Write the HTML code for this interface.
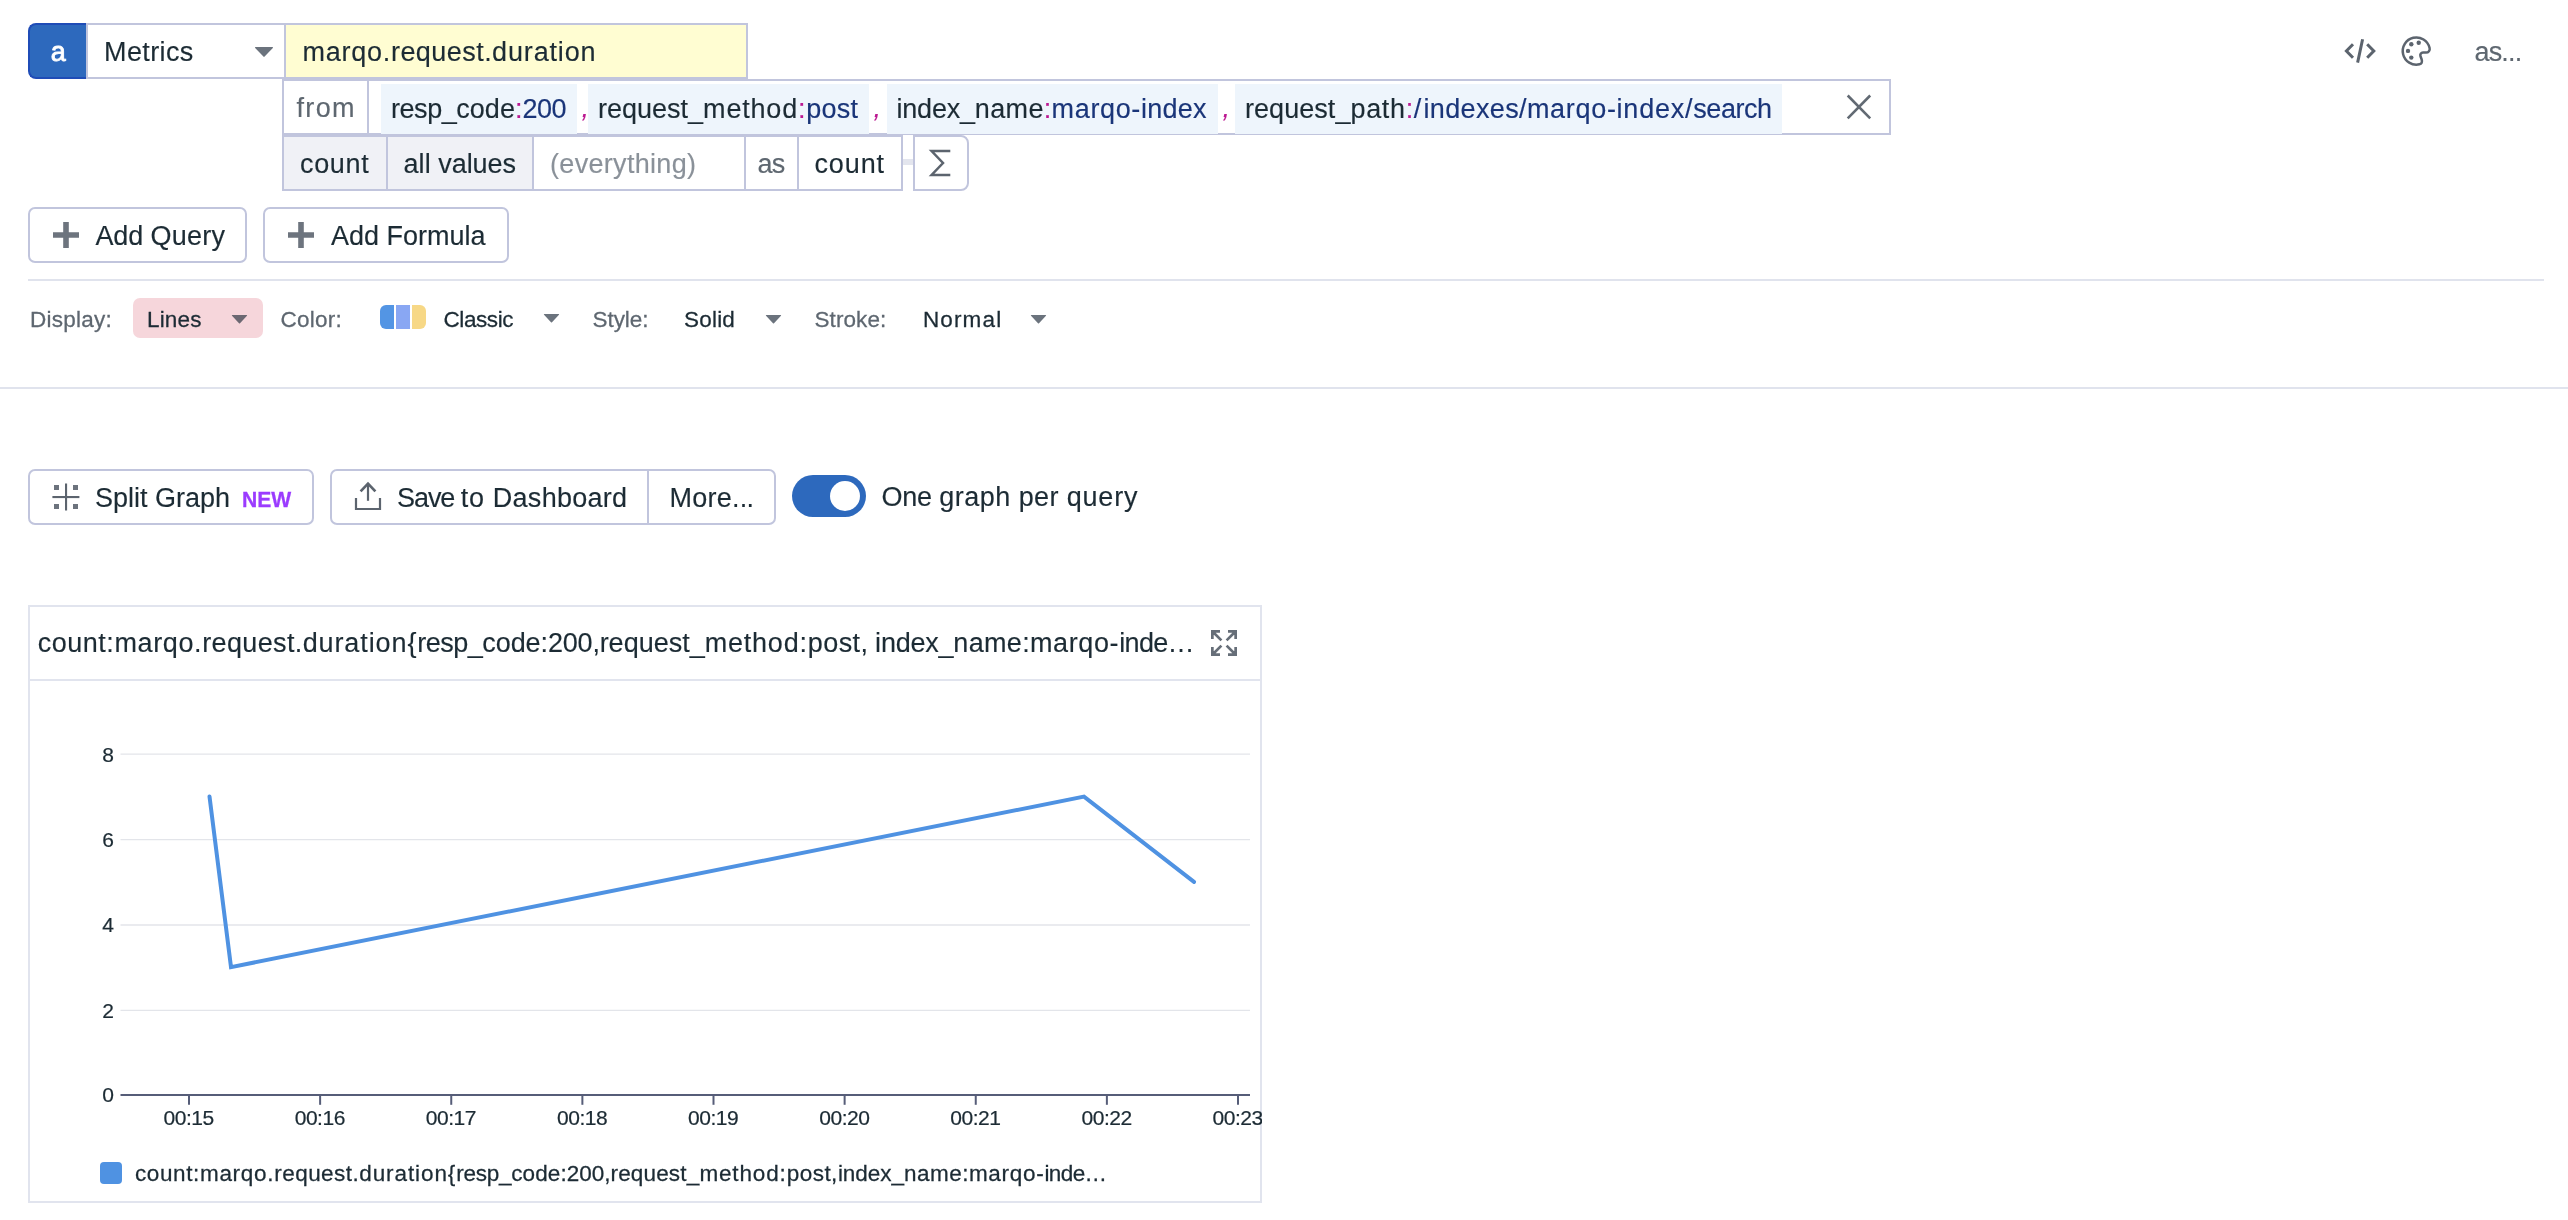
<!DOCTYPE html>
<html lang="en">
<head>
<meta charset="utf-8">
<title>Metrics Explorer</title>
<style>
html,body{margin:0;padding:0;background:#fff;}
body{width:2568px;height:1220px;position:relative;overflow:hidden;font-family:"Liberation Sans",Arial,sans-serif;color:#1c2b34;}
.t{position:absolute;white-space:pre;line-height:1;z-index:5;-webkit-text-stroke:0.15px;}
.b{position:absolute;box-sizing:border-box;}
.bd{border:2px solid #c1c5dd;background:#fff;}
.v{position:absolute;width:2px;background:#c1c5dd;}
.tag{position:absolute;top:84px;height:50px;background:#eef5fc;z-index:2;}
.cell{position:absolute;top:137px;height:52px;background:#f0f1f6;}
.btn{border:2px solid #c1c5dd;border-radius:7px;background:#fff;height:56px;}
.hr{position:absolute;height:2px;background:#e0e3ed;}
svg{position:absolute;overflow:visible;}
.ax{font-family:"Liberation Sans",Arial,sans-serif;font-size:21px;fill:#1c2b34;stroke:#1c2b34;stroke-width:0.22px;}
</style>
</head>
<body>

<!-- ===== query row 1 ===== -->
<div class="b" style="left:28px;top:23px;width:58px;height:56px;background:#2d69bd;border:2px solid #1f4cb7;border-right:none;border-radius:8px 0 0 8px;"></div>
<div class="b bd" style="left:86px;top:23px;width:200px;height:56px;"></div>
<div class="b bd" style="left:284px;top:23px;width:464px;height:56px;background:#fffdd2;"></div>
<svg style="left:254px;top:46px" width="20" height="12" viewBox="0 0 20 12"><path d="M1.6 1h16.8a.6.6 0 0 1 .45 1L10.6 10.6a.85.85 0 0 1-1.2 0L1.15 2A.6.6 0 0 1 1.6 1z" fill="#6b737d"/></svg>

<!-- top-right icons -->
<svg style="left:2340px;top:35px" width="40" height="32" viewBox="0 0 40 32" fill="none" stroke="#5c646e" stroke-width="3"><path d="M13 9.3L6.4 16l6.6 6.8M22.6 4.2l-5 23.4M27.2 9.3l6.6 6.7-6.6 6.8"/></svg>
<svg style="left:2400px;top:35px" width="32" height="32" viewBox="0 0 32 32"><path d="M19.5 29.3A13.6 13.6 0 1 1 29.6 13C30.2 15.5 28.5 17.6 26 17.6L23 17.6C21 17.6 19.8 19.3 20.5 21.2L21.6 24.2C22.6 27 21.5 29 19.5 29.3Z" fill="none" stroke="#5c646e" stroke-width="2.5" stroke-linejoin="round"/><g fill="#5c646e"><circle cx="11.3" cy="9.2" r="2.2"/><circle cx="18.7" cy="7.8" r="2.2"/><circle cx="8" cy="15.9" r="2.2"/><circle cx="11.3" cy="22.6" r="2.2"/></g></svg>

<!-- ===== query row 2 (from) ===== -->
<div class="b bd" style="left:282px;top:79px;width:1609px;height:56px;"></div>
<div class="v" style="left:367px;top:81px;height:52px;"></div>
<div class="tag" style="left:381px;width:196px;"></div>
<div class="tag" style="left:588px;width:281px;"></div>
<div class="tag" style="left:887px;width:331px;"></div>
<div class="tag" style="left:1235px;width:547px;"></div>
<svg style="left:1844px;top:92px" width="30" height="30" viewBox="0 0 30 30" stroke="#626a73" stroke-width="2.6" fill="none"><path d="M3.7 3.5l22.5 22.8M26.2 3.5L3.7 26.3"/></svg>

<!-- ===== query row 3 (aggregation) ===== -->
<div class="b bd" style="left:282px;top:135px;width:621px;height:56px;"></div>
<div class="cell" style="left:284px;width:102px;"></div>
<div class="v" style="left:386px;top:137px;height:52px;"></div>
<div class="cell" style="left:388px;width:144px;"></div>
<div class="v" style="left:532px;top:137px;height:52px;"></div>
<div class="v" style="left:744px;top:137px;height:52px;"></div>
<div class="v" style="left:797px;top:137px;height:52px;"></div>
<div class="b" style="left:903px;top:159px;width:10px;height:6px;background:#e3e5ee;"></div>
<div class="b bd" style="left:913px;top:135px;width:56px;height:56px;border-radius:0 8px 8px 0;"></div>
<svg style="left:925px;top:145px" width="32" height="36" viewBox="0 0 32 36" fill="none" stroke="#5c646e" stroke-width="2.5" stroke-linejoin="miter"><path d="M25.3 6.1H6.6L18 18 6.6 29.9h18.7"/></svg>

<!-- ===== add buttons ===== -->
<div class="b btn" style="left:28px;top:207px;width:219px;"></div>
<div class="b btn" style="left:263px;top:207px;width:246px;"></div>
<svg style="left:53px;top:222px" width="26" height="26" viewBox="0 0 26 26"><path d="M10.2 0h5.6v10.2H26v5.6H15.8V26h-5.6V15.8H0v-5.6h10.2z" fill="#6d747e"/></svg>
<svg style="left:288px;top:222px" width="26" height="26" viewBox="0 0 26 26"><path d="M10.2 0h5.6v10.2H26v5.6H15.8V26h-5.6V15.8H0v-5.6h10.2z" fill="#6d747e"/></svg>

<div class="hr" style="left:28px;top:279px;width:2516px;"></div>

<!-- ===== display options ===== -->
<div class="b" style="left:133px;top:298px;width:130px;height:40px;border-radius:7px;background:#f6d6db;"></div>
<svg style="left:230.5px;top:313.8px" width="17" height="11" viewBox="0 0 17 11"><path d="M1.4 1h14.2a.5.5 0 0 1 .38.85L9 9.2a.75.75 0 0 1-1 0L1 1.85A.5.5 0 0 1 1.4 1z" fill="#6c6872"/></svg>
<svg style="left:542.5px;top:312.8px" width="17" height="11" viewBox="0 0 17 11"><path d="M1.4 1h14.2a.5.5 0 0 1 .38.85L9 9.2a.75.75 0 0 1-1 0L1 1.85A.5.5 0 0 1 1.4 1z" fill="#6b737d"/></svg>
<svg style="left:764.5px;top:313.8px" width="17" height="11" viewBox="0 0 17 11"><path d="M1.4 1h14.2a.5.5 0 0 1 .38.85L9 9.2a.75.75 0 0 1-1 0L1 1.85A.5.5 0 0 1 1.4 1z" fill="#6b737d"/></svg>
<svg style="left:1029.5px;top:313.8px" width="17" height="11" viewBox="0 0 17 11"><path d="M1.4 1h14.2a.5.5 0 0 1 .38.85L9 9.2a.75.75 0 0 1-1 0L1 1.85A.5.5 0 0 1 1.4 1z" fill="#6b737d"/></svg>
<div class="b" style="left:380px;top:305px;width:14px;height:24px;background:#5395e4;border-radius:6px 0 0 6px;"></div>
<div class="b" style="left:396px;top:305px;width:14px;height:24px;background:#89a7f3;"></div>
<div class="b" style="left:412px;top:305px;width:14px;height:24px;background:#f7d886;border-radius:0 6px 6px 0;"></div>

<div class="hr" style="left:0;top:387px;width:2568px;"></div>

<!-- ===== graph toolbar ===== -->
<div class="b btn" style="left:28px;top:469px;width:286px;"></div>
<svg style="left:52px;top:483px" width="28" height="28" viewBox="0 0 28 28"><g fill="#5c646e"><rect x="13" y="0.5" width="2.1" height="27"/><rect x="0.4" y="13" width="27" height="2.1"/></g><g fill="#6c737d"><rect x="2" y="2" width="5" height="5"/><rect x="21" y="2" width="5" height="5"/><rect x="2" y="21" width="5" height="5"/><rect x="21" y="21" width="5" height="5"/></g></svg>
<div class="b btn" style="left:330px;top:469px;width:446px;"></div>
<div class="v" style="left:647px;top:471px;height:52px;"></div>
<svg style="left:354px;top:481px" width="28" height="30" viewBox="0 0 28 30" fill="none" stroke="#5c646e" stroke-width="2.2"><path d="M2 17v11h24V17"/><path d="M14 19.8V2.6"/><path d="M6.6 10.4L14 2.6l7.4 7.8" stroke-width="2.7"/></svg>
<div class="b" style="left:792px;top:475px;width:74px;height:42px;border-radius:21px;background:#2d69bd;"></div>
<div class="b" style="left:830px;top:481px;width:30px;height:30px;border-radius:15px;background:#fff;"></div>

<!-- ===== graph card ===== -->
<div class="b" style="left:28px;top:605px;width:1234px;height:598px;border:2px solid #e1e4ee;background:#fff;"></div>
<div class="hr" style="left:30px;top:679px;width:1230px;background:#e1e4ee;"></div>
<svg style="left:1211px;top:630px" width="26" height="26" viewBox="0 0 26 26" fill="none" stroke="#666e78" stroke-width="2.7"><path d="M1.35 9V1.35H9M1.8 1.8l8.6 8.6M17 1.35h7.65V9M24.2 1.8l-8.6 8.6M1.35 17v7.65H9M1.8 24.2l8.6-8.6M17 24.65h7.65V17M24.2 24.2l-8.6-8.6"/></svg>

<svg style="left:0;top:0;overflow:hidden;will-change:transform" width="1262" height="1220" viewBox="0 0 1262 1220">
  <g stroke="#e3e5ea" stroke-width="1.3">
    <line x1="120.5" y1="754.2" x2="1250" y2="754.2"/>
    <line x1="120.5" y1="839.6" x2="1250" y2="839.6"/>
    <line x1="120.5" y1="925" x2="1250" y2="925"/>
    <line x1="120.5" y1="1010.3" x2="1250" y2="1010.3"/>
  </g>
  <line x1="120.5" y1="1095" x2="1250" y2="1095" stroke="#565d78" stroke-width="2.2"/>
  <g stroke="#565d78" stroke-width="2">
    <line x1="189.00" y1="1095" x2="189.00" y2="1104.8"/><line x1="320.12" y1="1095" x2="320.12" y2="1104.8"/><line x1="451.25" y1="1095" x2="451.25" y2="1104.8"/><line x1="582.38" y1="1095" x2="582.38" y2="1104.8"/><line x1="713.50" y1="1095" x2="713.50" y2="1104.8"/><line x1="844.62" y1="1095" x2="844.62" y2="1104.8"/><line x1="975.75" y1="1095" x2="975.75" y2="1104.8"/><line x1="1106.88" y1="1095" x2="1106.88" y2="1104.8"/><line x1="1238.00" y1="1095" x2="1238.00" y2="1104.8"/>
  </g>
  <polyline points="209.5,796.6 231,967.1 1084,796.6 1194,881.9" fill="none" stroke="#4f92e2" stroke-width="4" stroke-linejoin="miter" stroke-linecap="round"/>
  <g class="ax" text-anchor="end">
    <text x="114" y="761.5">8</text><text x="114" y="847">6</text><text x="114" y="932.3">4</text><text x="114" y="1017.6">2</text><text x="114" y="1102">0</text>
  </g>
  <g class="ax" text-anchor="middle" letter-spacing="-0.45">
    <text x="188.70" y="1124.7">00:15</text><text x="319.82" y="1124.7">00:16</text><text x="450.95" y="1124.7">00:17</text><text x="582.08" y="1124.7">00:18</text><text x="713.20" y="1124.7">00:19</text><text x="844.33" y="1124.7">00:20</text><text x="975.45" y="1124.7">00:21</text><text x="1106.58" y="1124.7">00:22</text><text x="1237.70" y="1124.7">00:23</text>
  </g>
</svg>
<div class="b" style="left:100px;top:1162px;width:22px;height:22px;border-radius:4px;background:#4f92e2;"></div>

<!-- ===== text ===== -->
<div id="labels" style="position:absolute;left:0;top:0;width:2568px;height:1220px;will-change:transform;z-index:5;">
<span class="t" style="left:50.80px;top:39px;font-size:27px;color:#fff;-webkit-text-stroke:0.8px;">a</span>
<span class="t" style="left:104.00px;top:39px;font-size:27px;color:#1c2b34;letter-spacing:0.393px;">Metrics</span>
<span class="t" style="left:302.50px;top:39px;font-size:27px;color:#1c2b34;"><span style="letter-spacing:0.735px;">marqo.</span><span style="letter-spacing:0.448px;">request.</span><span style="letter-spacing:0.837px;">duration</span></span>
<span class="t" style="left:2474.50px;top:39px;font-size:27px;color:#5e6770;"><span style="letter-spacing:-0.849px;">as.</span><span style="letter-spacing:-0.643px;">.</span><span style="letter-spacing:-0.643px;">.</span></span>
<span class="t" style="left:296.50px;top:95px;font-size:27px;color:#5e6770;letter-spacing:1.328px;">from</span>
<span class="t" style="left:391.00px;top:96px;font-size:27px;color:#1c2b34;"><span style="letter-spacing:-0.455px;">resp_</span><span style="letter-spacing:0.037px;">code</span><span style="letter-spacing:0.037px;color:#bb1991;">:</span><span style="letter-spacing:-0.517px;color:#1a3579;">200</span></span>
<span class="t" style="left:598.00px;top:96px;font-size:27px;color:#1c2b34;">request_<span style="letter-spacing:0.807px;">method</span><span style="letter-spacing:0.807px;color:#bb1991;">:</span><span style="letter-spacing:0.229px;color:#1a3579;">post</span></span>
<span class="t" style="left:896.50px;top:96px;font-size:27px;color:#1c2b34;"><span style="letter-spacing:-0.201px;">index_</span><span style="letter-spacing:0.340px;">name</span><span style="letter-spacing:0.340px;color:#bb1991;">:</span><span style="letter-spacing:0.642px;color:#1a3579;">marqo-</span><span style="letter-spacing:0.246px;color:#1a3579;">index</span></span>
<span class="t" style="left:1245.00px;top:96px;font-size:27px;color:#1c2b34;"><span style="letter-spacing:0.051px;">request_</span><span style="letter-spacing:0.649px;">path</span><span style="letter-spacing:0.649px;color:#bb1991;">:</span><span style="letter-spacing:2.216px;color:#1a3579;">/</span><span style="letter-spacing:0.357px;color:#1a3579;">indexes/</span><span style="letter-spacing:0.684px;color:#1a3579;">marqo-</span><span style="letter-spacing:0.775px;color:#1a3579;">index/</span><span style="letter-spacing:-0.452px;color:#1a3579;">search</span></span>
<span class="t" style="left:581.50px;top:95px;font-size:27px;color:#bb1991;font-style:italic;">,</span>
<span class="t" style="left:873.50px;top:95px;font-size:27px;color:#bb1991;font-style:italic;">,</span>
<span class="t" style="left:1222.50px;top:95px;font-size:27px;color:#bb1991;font-style:italic;">,</span>
<span class="t" style="left:300.00px;top:151px;font-size:27px;color:#1c2b34;letter-spacing:0.666px;">count</span>
<span class="t" style="left:403.50px;top:151px;font-size:27px;color:#1c2b34;"><span style="letter-spacing:0.062px;">all </span><span style="letter-spacing:-0.062px;">values</span></span>
<span class="t" style="left:550.00px;top:151px;font-size:27px;color:#8a9199;letter-spacing:0.313px;">(everything)</span>
<span class="t" style="left:757.50px;top:151px;font-size:27px;color:#5e6770;letter-spacing:-0.783px;">as</span>
<span class="t" style="left:814.50px;top:151px;font-size:27px;color:#1c2b34;letter-spacing:0.870px;">count</span>
<span class="t" style="left:95.50px;top:223px;font-size:27px;color:#1c2b34;"><span style="letter-spacing:-0.166px;">Add </span><span style="letter-spacing:0.275px;">Query</span></span>
<span class="t" style="left:331.00px;top:223px;font-size:27px;color:#1c2b34;"><span style="letter-spacing:-0.038px;">Add </span><span style="letter-spacing:0.018px;">Formula</span></span>
<span class="t" style="left:30.00px;top:309px;font-size:22.5px;color:#5e6770;-webkit-text-stroke:0.27px;letter-spacing:0.238px;">Display:</span>
<span class="t" style="left:147.00px;top:309px;font-size:22.5px;color:#1c2b34;-webkit-text-stroke:0.27px;letter-spacing:0.158px;">Lines</span>
<span class="t" style="left:280.50px;top:309px;font-size:22.5px;color:#5e6770;-webkit-text-stroke:0.27px;letter-spacing:0.231px;">Color:</span>
<span class="t" style="left:443.50px;top:309px;font-size:22.5px;color:#1c2b34;-webkit-text-stroke:0.27px;letter-spacing:-0.420px;">Classic</span>
<span class="t" style="left:592.50px;top:309px;font-size:22.5px;color:#5e6770;-webkit-text-stroke:0.27px;letter-spacing:-0.059px;">Style:</span>
<span class="t" style="left:684.00px;top:309px;font-size:22.5px;color:#1c2b34;-webkit-text-stroke:0.27px;letter-spacing:0.208px;">Solid</span>
<span class="t" style="left:814.50px;top:309px;font-size:22.5px;color:#5e6770;-webkit-text-stroke:0.27px;letter-spacing:0.088px;">Stroke:</span>
<span class="t" style="left:923.00px;top:309px;font-size:22.5px;color:#1c2b34;-webkit-text-stroke:0.27px;letter-spacing:1.123px;">Normal</span>
<span class="t" style="left:95.00px;top:485px;font-size:27px;color:#1c2b34;">Split <span style="letter-spacing:-0.014px;">Graph</span></span>
<span class="t" style="left:242.06px;top:489px;font-size:22.5px;color:#9b3bff;font-weight:700;transform:scaleX(0.9377);transform-origin:0 0;-webkit-text-stroke:0.27px;">NEW</span>
<span class="t" style="left:397.00px;top:485px;font-size:27px;color:#1c2b34;"><span style="letter-spacing:-1.053px;">Save </span><span style="letter-spacing:0.667px;">to </span><span style="letter-spacing:0.267px;">Dashboard</span></span>
<span class="t" style="left:669.50px;top:485px;font-size:27px;color:#1c2b34;"><span style="letter-spacing:0.233px;">More.</span><span style="letter-spacing:-0.629px;">.</span><span style="letter-spacing:-0.629px;">.</span></span>
<span class="t" style="left:881.50px;top:484px;font-size:27px;color:#1c2b34;"><span style="letter-spacing:-0.214px;">One </span><span style="letter-spacing:0.482px;">graph </span><span style="letter-spacing:0.382px;">per </span><span style="letter-spacing:0.819px;">query</span></span>
<span class="t" style="left:37.70px;top:630px;font-size:27px;color:#1c2b34;"><span style="letter-spacing:0.526px;">count:</span><span style="letter-spacing:0.630px;">marqo.</span><span style="letter-spacing:0.358px;">request.</span><span style="letter-spacing:0.895px;">duration{</span><span style="letter-spacing:-0.532px;">resp_</span><span style="letter-spacing:-0.042px;">code:</span><span style="letter-spacing:-0.240px;">200,</span><span style="letter-spacing:-0.009px;">request_</span><span style="letter-spacing:0.796px;">method:</span><span style="letter-spacing:0.400px;">post,</span><span style="letter-spacing:-0.741px;"> </span><span style="letter-spacing:-0.224px;">index_</span><span style="letter-spacing:0.313px;">name:</span><span style="letter-spacing:0.616px;">marqo-</span><span style="letter-spacing:-0.652px;">inde…</span></span>
<span class="t" style="left:135.00px;top:1163px;font-size:22.5px;color:#1c2b34;-webkit-text-stroke:0.27px;"><span style="letter-spacing:0.603px;">count:</span><span style="letter-spacing:0.713px;">marqo.</span><span style="letter-spacing:0.459px;">request.</span><span style="letter-spacing:0.909px;">duration{</span><span style="letter-spacing:-0.277px;">resp_</span><span style="letter-spacing:0.134px;">code:</span><span style="letter-spacing:-0.035px;">200,</span><span style="letter-spacing:0.161px;">request_</span><span style="letter-spacing:0.852px;">method:</span><span style="letter-spacing:0.489px;">post,</span><span style="letter-spacing:-0.020px;">index_</span><span style="letter-spacing:0.457px;">name:</span><span style="letter-spacing:0.704px;">marqo-</span><span style="letter-spacing:-0.580px;">inde…</span></span>
</div>

</body>
</html>
